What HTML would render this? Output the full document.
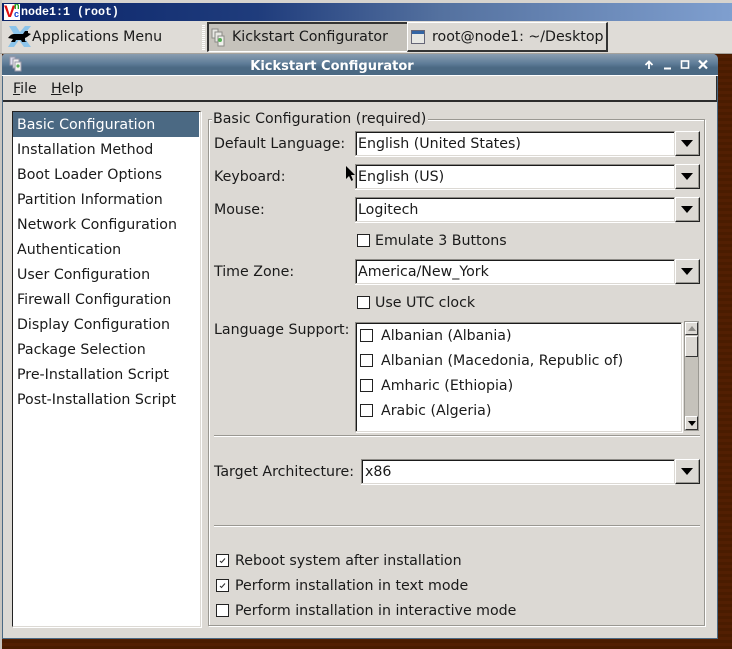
<!DOCTYPE html>
<html><head><meta charset="utf-8">
<style>
html,body{margin:0;padding:0}
body{width:732px;height:649px;overflow:hidden;position:relative;background:#dcd9d4;font-family:"DejaVu Sans","Liberation Sans",sans-serif;font-size:14.2px;color:#1a1a1a}
.a{position:absolute;box-sizing:border-box}
.t{position:absolute;white-space:nowrap;line-height:18px;height:18px;margin-top:1px}
u{text-decoration:underline}
.entry{position:absolute;box-sizing:border-box;left:355px;width:320px;background:#fff;border-top:1px solid #8e8c87;border-left:1px solid #8e8c87;border-right:1px solid #dcd9d4;border-bottom:1px solid #dcd9d4;box-shadow:inset 1px 1px 0 #1a1a1a,0 1px 0 #fff}
.btn{position:absolute;box-sizing:border-box;left:675px;width:25px;background:#dcd9d4;border-top:1px solid #fff;border-left:1px solid #fff;border-right:1px solid #222;border-bottom:1px solid #222;box-shadow:inset -1px -1px 0 #9a9892}
.btn:after{content:"";position:absolute;left:5px;top:8px;border-left:6px solid transparent;border-right:6px solid transparent;border-top:7px solid #000}
.cb{position:absolute;box-sizing:border-box;width:13px;height:13px;background:#fff;border:1px solid #222}
.hr{position:absolute;left:214px;width:486px;height:2px;border-top:1px solid #9a9892;border-bottom:1px solid #fff;box-sizing:border-box}
</style></head><body>
<div class="a" style="left:0;top:0;width:732px;height:3px;background:#d6d3ce"></div>
<div class="a" style="left:0;top:0;width:2px;height:649px;background:#c8c5c0"></div>
<div class="a" style="left:2px;top:3px;width:730px;height:18px;background:linear-gradient(90deg,#0a246a 0%,#1f3c7c 35%,#54719f 60%,#7f9fcf 100%)"></div>
<div class="a" style="left:4px;top:4px;width:16px;height:16px;background:#fff"></div>
<div class="t" style="left:4px;top:2px;font:bold 17px/18px 'Liberation Sans',sans-serif;color:#e01010">V</div>
<div class="t" style="left:14px;top:0;font:bold 9px/11px 'Liberation Sans',sans-serif;color:#10a010;height:10px">n</div>
<div class="t" style="left:14px;top:8px;font:bold 9px/11px 'Liberation Sans',sans-serif;color:#1040d0;height:10px">c</div>
<div class="t" style="left:21px;top:2px;font:bold 11.67px/18px 'Liberation Mono',monospace;color:#fff">node1:1 (root)</div>

<div class="a" style="left:2px;top:21px;width:730px;height:32px;background:#dfdcd7"></div>
<svg class="a" style="left:6px;top:24px" width="26" height="26" viewBox="0 0 26 26">
<path d="M3 2L10 2L14 8L19 2L25 2L17 12L25 23L18 23L13 16L8 23L2 23L9 12Z" fill="#8cc4ea"/>
<path d="M2 14C4 12 5 10 8 10L17 10L19 7L22 7L22 9L25 10L21 13L19 14L19 17L21 18L16 18L15 16L10 16L9 18L5 18L7 15Z" fill="#000"/>
</svg>
<div class="t" style="left:32px;top:27px">Applications Menu</div>
<div class="a" style="left:202px;top:24px;width:3px;height:26px;background:repeating-linear-gradient(0deg,#fff 0 1px,#dfdcd7 1px 2px)"></div>

<div class="a" style="left:207px;top:22px;width:201px;height:30px;background:#c5c2bb;border-top:2px solid #333;border-left:2px solid #333;border-right:1px solid #fff;border-bottom:1px solid #fff"></div>
<svg class="a" style="left:211px;top:28px" width="14" height="19" viewBox="0 0 14 19">
<rect x="1" y="1" width="6" height="9" fill="#e8e8e4" stroke="#8a8a86"/><rect x="4" y="4" width="7" height="10" fill="#e8e8e4" stroke="#8a8a86"/><rect x="7" y="8" width="6" height="10" fill="#f0f0ec" stroke="#8a8a86"/><circle cx="9" cy="12" r="2" fill="#58b058"/>
</svg>
<div class="t" style="left:232px;top:27px">Kickstart Configurator</div>

<div class="a" style="left:407px;top:22px;width:201px;height:30px;background:#dcd9d4;border-top:1px solid #fff;border-left:1px solid #fff;border-right:2px solid #333;border-bottom:2px solid #333"></div>
<svg class="a" style="left:411px;top:30px" width="15" height="15" viewBox="0 0 15 15">
<rect x=".5" y=".5" width="13" height="13" fill="#e8e8e4" stroke="#667"/><rect x="1" y="1" width="12" height="3" fill="#3465a4"/>
</svg>
<div class="t" style="left:432px;top:27px">root@node1: ~/Desktop</div>

<div class="a" style="left:2px;top:53px;width:730px;height:596px;background:repeating-linear-gradient(0deg,#4a1c00 0 3px,#521f02 3px 6px)"></div>
<div class="a" style="left:0;top:53px;width:732px;height:1px;background:#a5a29c"></div>
<div class="a" style="left:2px;top:54px;width:716px;height:585px;background:#dcd9d4;border-left:1px solid #4b6983;border-right:1px solid #4b6983;border-bottom:1px solid #4b6983;border-radius:3px 5px 0 0"></div>
<div class="a" style="left:2px;top:54px;width:716px;height:21px;background:linear-gradient(180deg,#8a9db0 0%,#5f7d98 45%,#4b6983 65%,#4b6983 100%);border-radius:3px 5px 0 0"></div>
<div class="a" style="left:2px;top:75px;width:716px;height:1px;background:#fff"></div>
<svg class="a" style="left:9px;top:56px" width="13" height="16" viewBox="0 0 13 16">
<rect x="1" y="1" width="5" height="8" fill="#dde" stroke="#99a"/><rect x="4" y="3" width="6" height="9" fill="#eee" stroke="#99a"/><rect x="6" y="6" width="6" height="9" fill="#f4f4f0" stroke="#99a"/><circle cx="9" cy="10" r="1.6" fill="#58b058"/>
</svg>
<div class="t" style="left:2px;top:57px;width:660px;text-align:center;color:#fff;font-weight:bold;font-size:13px">Kickstart Configurator</div>
<svg class="a" style="left:640px;top:58px" width="72" height="14" viewBox="0 0 72 14" fill="none" stroke="#fff" stroke-width="2">
<path d="M9 11V4M5.500 7L9 3.500L12.500 7" stroke-width="1.800"/>
<path d="M24 10.500H31"/>
<rect x="41.500" y="3" width="7" height="7" stroke-width="1.600"/>
<path d="M59 2.500L67 10.500M67 2.500L59 10.500" stroke-width="2.200"/>
</svg>

<div class="a" style="left:3px;top:76px;width:714px;height:26px;background:#dcd9d4;border-bottom:2px solid #2c2c2c;border-right:1px solid #2c2c2c"></div>
<div class="t" style="left:13px;top:79px"><u>F</u>ile</div>
<div class="t" style="left:51px;top:79px"><u>H</u>elp</div>

<div class="a" style="left:12px;top:111px;width:189px;height:516px;background:#fff;border-top:1px solid #222;border-left:1px solid #222;border-right:1px solid #dcd9d4;border-bottom:1px solid #dcd9d4;box-shadow:1px 1px 0 #fff"></div>
<div class="a" style="left:13px;top:112px;width:186px;height:25px;background:#4b6983"></div>
<div class="t" style="left:17px;top:115px;color:#fff">Basic Configuration</div>
<div class="t" style="left:17px;top:140px">Installation Method</div>
<div class="t" style="left:17px;top:165px">Boot Loader Options</div>
<div class="t" style="left:17px;top:190px">Partition Information</div>
<div class="t" style="left:17px;top:215px">Network Configuration</div>
<div class="t" style="left:17px;top:240px">Authentication</div>
<div class="t" style="left:17px;top:265px">User Configuration</div>
<div class="t" style="left:17px;top:290px">Firewall Configuration</div>
<div class="t" style="left:17px;top:315px">Display Configuration</div>
<div class="t" style="left:17px;top:340px">Package Selection</div>
<div class="t" style="left:17px;top:365px">Pre-Installation Script</div>
<div class="t" style="left:17px;top:390px">Post-Installation Script</div>

<div class="a" style="left:208px;top:119px;width:497px;height:507px;border:1px solid #9a9892;box-shadow:1px 1px 0 #fff,inset 1px 1px 0 #fff"></div>
<div class="a" style="left:212px;top:112px;width:216px;height:14px;background:#dcd9d4"></div>
<div class="t" style="left:213px;top:109px">Basic Configuration (required)</div>

<div class="t" style="left:214px;top:134px">Default Language:</div>
<div class="entry" style="top:131px;height:25px"></div><div class="btn" style="top:131px;height:25px"></div>
<div class="t" style="left:358px;top:134px">English (United States)</div>

<div class="t" style="left:214px;top:167px">Keyboard:</div>
<div class="entry" style="top:164px;height:25px"></div><div class="btn" style="top:164px;height:25px"></div>
<div class="t" style="left:358px;top:167px">English (US)</div>
<svg class="a" style="left:345px;top:165px" width="12" height="18" viewBox="0 0 12 18"><path d="M1 1L1 14L4 11L6.500 16L8 15L6 10L10 10Z" fill="#000"/></svg>

<div class="t" style="left:214px;top:200px">Mouse:</div>
<div class="entry" style="top:197px;height:25px"></div><div class="btn" style="top:197px;height:25px"></div>
<div class="t" style="left:358px;top:200px">Logitech</div>

<div class="cb" style="left:357px;top:234px"></div>
<div class="t" style="left:375px;top:231px">Emulate 3 Buttons</div>

<div class="t" style="left:214px;top:262px">Time Zone:</div>
<div class="entry" style="top:259px;height:25px"></div><div class="btn" style="top:259px;height:25px"></div>
<div class="t" style="left:358px;top:262px">America/New_York</div>

<div class="cb" style="left:357px;top:296px"></div>
<div class="t" style="left:375px;top:293px">Use UTC clock</div>

<div class="t" style="left:214px;top:320px">Language Support:</div>
<div class="a" style="left:355px;top:322px;width:327px;height:110px;background:#fff;border-top:1px solid #8e8c87;border-left:1px solid #8e8c87;border-right:1px solid #dcd9d4;border-bottom:1px solid #dcd9d4;box-shadow:inset 1px 1px 0 #1a1a1a,1px 1px 0 #fff"></div>
<div class="cb" style="left:360px;top:329px"></div><div class="t" style="left:381px;top:326px">Albanian (Albania)</div>
<div class="cb" style="left:360px;top:354px"></div><div class="t" style="left:381px;top:351px">Albanian (Macedonia, Republic of)</div>
<div class="cb" style="left:360px;top:379px"></div><div class="t" style="left:381px;top:376px">Amharic (Ethiopia)</div>
<div class="cb" style="left:360px;top:404px"></div><div class="t" style="left:381px;top:401px">Arabic (Algeria)</div>

<div class="a" style="left:684px;top:321px;width:15px;height:110px;background:#c5c2bb;border:1px solid #9a9892"></div>
<div class="a" style="left:685px;top:322px;width:13px;height:13px;background:#dcd9d4;border-top:1px solid #fff;border-left:1px solid #fff;border-right:1px solid #333;border-bottom:1px solid #333"></div>
<div class="a" style="left:688px;top:326px;border-left:4px solid transparent;border-right:4px solid transparent;border-bottom:5px solid #8f8d88"></div>
<div class="a" style="left:685px;top:336px;width:13px;height:21px;background:#dcd9d4;border-top:1px solid #fff;border-left:1px solid #fff;border-right:1px solid #333;border-bottom:1px solid #333"></div>
<div class="a" style="left:685px;top:416px;width:13px;height:14px;background:#dcd9d4;border-top:1px solid #fff;border-left:1px solid #fff;border-right:1px solid #333;border-bottom:1px solid #333"></div>
<div class="a" style="left:688px;top:421px;border-left:4px solid transparent;border-right:4px solid transparent;border-top:5px solid #000"></div>

<div class="hr" style="top:435px"></div>

<div class="t" style="left:214px;top:462px">Target Architecture:</div>
<div class="entry" style="left:361px;width:314px;top:459px;height:25px"></div><div class="btn" style="top:459px;height:25px"></div>
<div class="t" style="left:365px;top:462px">x86</div>

<div class="hr" style="top:525px"></div>

<div class="cb" style="left:216px;top:554px"></div>
<svg class="a" style="left:216px;top:554px" width="13" height="13" viewBox="0 0 13 13"><path d="M4 7L5.500 8.500L9 4.500" fill="none" stroke="#333" stroke-width="1.100"/></svg>
<div class="t" style="left:235px;top:551px">Reboot system after installation</div>
<div class="cb" style="left:216px;top:579px"></div>
<svg class="a" style="left:216px;top:579px" width="13" height="13" viewBox="0 0 13 13"><path d="M4 7L5.500 8.500L9 4.500" fill="none" stroke="#333" stroke-width="1.100"/></svg>
<div class="t" style="left:235px;top:576px">Perform installation in text mode</div>
<div class="cb" style="left:216px;top:604px"></div>
<div class="t" style="left:235px;top:601px">Perform installation in interactive mode</div>
</body></html>
